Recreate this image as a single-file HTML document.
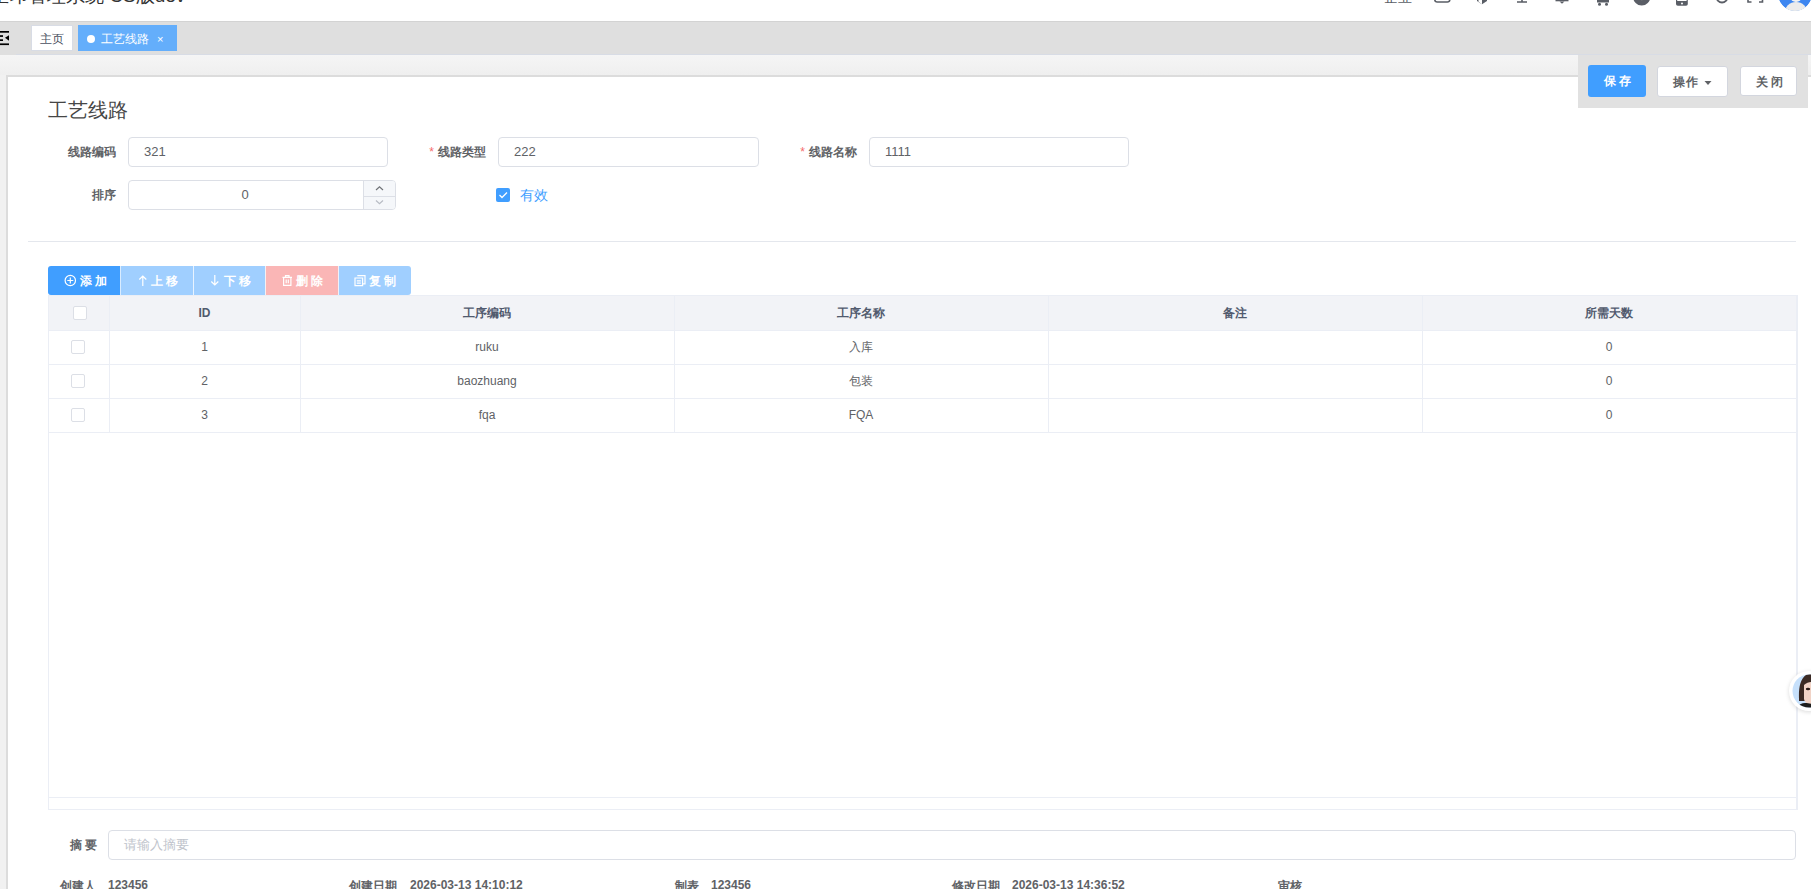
<!DOCTYPE html>
<html><head><meta charset="utf-8">
<style>
*{box-sizing:border-box;margin:0;padding:0}
html,body{width:1811px;height:889px;overflow:hidden;background:#fff;font-family:"Liberation Sans",sans-serif;color:#606266}
.a{position:absolute}
#hdr{left:0;top:0;width:1811px;height:21px;background:#fff;overflow:hidden}
#tabs{left:0;top:21px;width:1811px;height:34px;background:#dfdfdf;border-top:1px solid #d3d3d3}
.tag{height:26px;line-height:26px;font-size:12px;border:1px solid #d8dce5;background:#fff;color:#495060;padding:0 8px}
#under{left:0;top:55px;width:1811px;height:20px;background:linear-gradient(#f5f5f5,#efefef)}
#card{left:6px;top:75px;width:1805px;height:814px;background:#fff;border-left:2px solid #dcdcdc;border-top:2px solid #dcdcdc}
#leftstrip{left:0;top:75px;width:6px;height:814px;background:#f1f1f1}
.lbl{font-size:12px;font-weight:bold;color:#606266;text-align:right;white-space:nowrap}
.req:before{content:"*";color:#f56c6c;margin-right:4px;font-weight:normal}
.inp{border:1px solid #dcdfe6;border-radius:4px;background:#fff;font-size:13px;color:#606266;padding-left:15px;white-space:nowrap}
.btn{border-radius:3px;font-size:12px;text-align:center;letter-spacing:3px;white-space:nowrap}
.tb{top:266px;height:29px;line-height:29px;font-size:12px;font-weight:bold;color:#fff;text-align:center;letter-spacing:2px;white-space:nowrap}
.cb{width:14px;height:14px;border:1px solid #dcdfe6;border-radius:2px;background:#fff}
.vl{width:1px;background:#ebeef5}
.hl{height:1px;background:#ebeef5}
.th{top:296px;height:34px;line-height:34px;font-size:12px;font-weight:bold;color:#515a6e;text-align:center}
.td{height:34px;line-height:34px;font-size:12px;color:#606266;text-align:center}
.ft{top:878px;font-size:12px;font-weight:bold;color:#606266;white-space:nowrap}
</style></head><body>

<div id="hdr" class="a">
  <div class="a" style="left:-10px;top:-17px;font-size:19px;color:#333;white-space:nowrap"><span id="t1">生印管理系统</span> <span id="t2">CS</span><span id="t3">版</span><span id="t4">dev</span></div>
  <div class="a" style="left:1384px;top:-11px;font-size:14px;color:#5a5e66;white-space:nowrap">企业</div>
  <svg class="a" style="left:1380px;top:0" width="431" height="21" viewBox="1380 0 431 21">
    <g fill="none" stroke="#5a5e66" stroke-width="1.6">
      <rect x="1434.8" y="-10" width="15" height="12" rx="2.5"/>
      <path d="M1517 2 H1527 M1522 -3 V2"/>
      <path d="M1555.5 0.5 H1568.5"/>
      <path d="M1748 -6 V2 H1751.5 M1762.5 -6 V2 H1759"/>
    </g>
    <path d="M1477 -4 L1477 1 L1482 4.2 L1487 1 L1487 -4 Z" fill="#5a5e66"/>
    <path d="M1482 -4 L1482 4.2 L1478.5 1.8 L1478.5 -4 Z" fill="#fff"/>
    <path d="M1559.5 1.5 L1564.5 1.5 L1562 3.8 Z" fill="#5a5e66"/>
    <path d="M1597 -6 L1597 2.5 L1609 2.5 L1609 -6 Z" fill="#5a5e66"/>
    <circle cx="1599.5" cy="4.3" r="1.5" fill="#5a5e66"/><circle cx="1606.5" cy="4.3" r="1.5" fill="#5a5e66"/>
    <circle cx="1641.7" cy="-3" r="8.6" fill="#5a5e66"/>
    <path d="M1641 -6 L1642.5 -6 L1642 1 Z" fill="#fff"/>
    <rect x="1676" y="-10" width="11.8" height="15.8" rx="1.8" fill="#5a5e66"/>
    <rect x="1677.2" y="-10" width="9.4" height="11" fill="#fff"/>
    <circle cx="1682" cy="3.5" r="1" fill="#fff"/>
    <path d="M1716.5 -3 A5.5 5.5 0 0 0 1727.5 -3" fill="none" stroke="#5a5e66" stroke-width="1.8"/>
    <clipPath id="avc"><circle cx="1795" cy="-6" r="17"/></clipPath>
    <g clip-path="url(#avc)">
    <circle cx="1795" cy="-6" r="17" fill="#3d86f0"/>
    <ellipse cx="1796" cy="13" rx="11.5" ry="11" fill="#ececec"/>
    <circle cx="1796" cy="-4" r="6" fill="#f2f2f2"/>
    </g>
  </svg>
</div>

<div id="tabs" class="a">
  <svg class="a" style="left:0;top:9px" width="10" height="15" viewBox="0 0 10 15">
    <rect x="0" y="0" width="9" height="1.7" fill="#000"/>
    <rect x="0" y="4.2" width="3" height="1.7" fill="#000"/>
    <rect x="0" y="8.3" width="3" height="1.7" fill="#000"/>
    <rect x="0" y="12.4" width="9" height="1.7" fill="#000"/>
    <path d="M9 4.3 L5 6.8 L9 9.8 Z" fill="#000"/>
  </svg>
  <div class="a tag" style="left:31px;top:3px;width:42px;white-space:nowrap;padding:0 0 0 8px">主页</div>
  <div class="a tag" style="left:78px;top:3px;width:99px;background:#64aefb;border-color:#64aefb;color:#fff;padding-left:22px">工艺线路<span style="font-size:11px;margin-left:8px">×</span>
    <span class="a" style="left:8px;top:9px;width:8px;height:8px;border-radius:50%;background:#fff"></span>
  </div>
</div>

<div id="under" class="a"></div>
<div class="a" style="left:16px;top:54px;width:1795px;height:1px;background:#d8dce5"></div>
<div id="leftstrip" class="a"></div>
<div id="card" class="a"></div>

<!-- action bar -->
<div class="a" style="left:1578px;top:55px;width:230px;height:53px;background:#e1e1e1"></div>
<div class="a btn" style="left:1588px;top:65px;width:58px;height:32px;line-height:33px;background:#409eff;color:#fff;font-weight:bold;padding-left:4px">保存</div>
<div class="a btn" style="left:1657px;top:66px;width:71px;height:31px;line-height:30px;background:#fff;color:#606266;border:1px solid #d3d6de;font-weight:bold;letter-spacing:1px;text-align:left;padding-left:15px">操作<svg style="position:absolute;left:46px;top:13px" width="8" height="6" viewBox="0 0 8 6"><path d="M0.5 1 L7.5 1 L4 5 Z" fill="#606266"/></svg></div>
<div class="a btn" style="left:1740px;top:66px;width:57px;height:30px;line-height:30px;background:#fff;color:#606266;border:1px solid #d3d6de;font-weight:bold;padding-left:4px">关闭</div>

<!-- title -->
<div class="a" style="left:48px;top:97px;font-size:20px;color:#464646;white-space:nowrap">工艺线路</div>

<!-- form -->
<div class="a lbl" style="left:28px;top:144px;width:88px">线路编码</div>
<div class="a inp" style="left:128px;top:137px;width:260px;height:30px;line-height:28px">321</div>
<div class="a lbl req" style="left:398px;top:144px;width:88px">线路类型</div>
<div class="a inp" style="left:498px;top:137px;width:261px;height:30px;line-height:28px">222</div>
<div class="a lbl req" style="left:769px;top:144px;width:88px">线路名称</div>
<div class="a inp" style="left:869px;top:137px;width:260px;height:30px;line-height:28px">1111</div>

<div class="a lbl" style="left:28px;top:187px;width:88px">排序</div>
<div class="a inp" style="left:128px;top:180px;width:268px;height:30px;line-height:28px;padding:0 34px 0 0;text-align:center">0</div>
<div class="a" style="left:363px;top:181px;width:32px;height:28px;background:#f5f7fa;border-left:1px solid #dcdfe6;border-radius:0 3px 3px 0"></div>
<div class="a" style="left:364px;top:196px;width:31px;height:1px;background:#dcdfe6"></div>
<svg class="a" style="left:364px;top:181px" width="31" height="28" viewBox="0 0 31 28"><g fill="none" stroke-width="1.2"><path d="M12 9 L15.5 5.8 L19 9" stroke="#707378"/><path d="M12 19.5 L15.5 22.7 L19 19.5" stroke="#b8bcc4"/></g></svg>

<div class="a" style="left:496px;top:188px;width:14px;height:14px;border-radius:2px;background:#409eff"></div>
<svg class="a" style="left:496px;top:188px" width="14" height="14" viewBox="0 0 14 14"><path d="M3.5 7 L6 9.5 L11 4.5" stroke="#fff" stroke-width="1.3" fill="none"/></svg>
<div class="a" style="left:520px;top:187px;font-size:14px;color:#409eff">有效</div>

<div class="a" style="left:28px;top:241px;width:1768px;height:1px;background:#e4e7ed"></div>

<!-- toolbar -->
<div class="a tb" style="left:48px;width:72px;background:#409eff;border-radius:3px 0 0 3px"></div>
<div class="a tb" style="left:121px;width:72px;background:#a0cfff"></div>
<div class="a tb" style="left:194px;width:71px;background:#a0cfff"></div>
<div class="a tb" style="left:266px;width:72px;background:#fab6b6"></div>
<div class="a tb" style="left:339px;width:72px;background:#a0cfff;border-radius:0 3px 3px 0"></div>
<div class="a" style="left:120px;top:266px;width:1px;height:29px;background:#d9ecff"></div>
<div class="a" style="left:193px;top:266px;width:1px;height:29px;background:#e8f3ff"></div>
<div class="a" style="left:265px;top:266px;width:1px;height:29px;background:#f5f0f3"></div>
<div class="a" style="left:338px;top:266px;width:1px;height:29px;background:#f0f0f8"></div>
<svg class="a" style="left:0;top:260px" width="420" height="40" viewBox="0 260 420 40">
  <g fill="none" stroke="#fff" stroke-width="1.2">
    <circle cx="70.3" cy="280.5" r="5.2"/>
    <path d="M70.3 277.5 V283.5 M67.3 280.5 H73.3"/>
    <path d="M142.8 276 V286 M139.3 279.5 L142.8 276 L146.3 279.5"/>
    <path d="M214.8 275 V285 M211.3 281.5 L214.8 285 L218.3 281.5"/>
    <path d="M282.5 277.3 H292 M285.5 277.3 V275.6 H289 V277.3 M283.6 277.3 V285.4 H290.9 V277.3 M286.2 279.5 V283.2 M288.3 279.5 V283.2"/>
    <path d="M357.3 275.6 H365 V283.8 H362.8"/>
    <path d="M355 278 H362.6 V285.6 H355 Z M356.8 280.8 H360.8 M356.8 283.2 H360.8"/>
  </g>
  <g font-family="Liberation Sans" font-size="12" font-weight="bold" fill="#fff">
    <text x="79.5" y="284.7" letter-spacing="3">添加</text>
    <text x="151.3" y="284.7" letter-spacing="3">上移</text>
    <text x="224" y="284.7" letter-spacing="3">下移</text>
    <text x="296.3" y="284.7" letter-spacing="3">删除</text>
    <text x="369" y="284.7" letter-spacing="3">复制</text>
  </g>
</svg>

<!-- table -->
<div class="a" style="left:48px;top:295px;width:1750px;height:515px;border:1px solid #ebeef5;border-right-width:2px"></div>
<div class="a" style="left:49px;top:296px;width:1747px;height:34px;background:#f2f3f7"></div>
<div class="a hl" style="left:49px;top:330px;width:1747px"></div>
<div class="a hl" style="left:49px;top:364px;width:1747px"></div>
<div class="a hl" style="left:49px;top:398px;width:1747px"></div>
<div class="a hl" style="left:49px;top:432px;width:1747px"></div>
<div class="a hl" style="left:49px;top:797px;width:1747px"></div>
<div class="a vl" style="left:109px;top:296px;height:137px"></div>
<div class="a vl" style="left:300px;top:296px;height:137px"></div>
<div class="a vl" style="left:674px;top:296px;height:137px"></div>
<div class="a vl" style="left:1048px;top:296px;height:137px"></div>
<div class="a vl" style="left:1422px;top:296px;height:137px"></div>

<div class="a cb" style="left:73px;top:306px"></div>
<div class="a th" style="left:109px;width:191px">ID</div>
<div class="a th" style="left:300px;width:374px">工序编码</div>
<div class="a th" style="left:674px;width:374px">工序名称</div>
<div class="a th" style="left:1048px;width:374px">备注</div>
<div class="a th" style="left:1422px;width:374px">所需天数</div>

<div class="a cb" style="left:71px;top:340px"></div>
<div class="a td" style="top:330px;left:109px;width:191px">1</div>
<div class="a td" style="top:330px;left:300px;width:374px">ruku</div>
<div class="a td" style="top:330px;left:674px;width:374px">入库</div>
<div class="a td" style="top:330px;left:1422px;width:374px">0</div>

<div class="a cb" style="left:71px;top:374px"></div>
<div class="a td" style="top:364px;left:109px;width:191px">2</div>
<div class="a td" style="top:364px;left:300px;width:374px">baozhuang</div>
<div class="a td" style="top:364px;left:674px;width:374px">包装</div>
<div class="a td" style="top:364px;left:1422px;width:374px">0</div>

<div class="a cb" style="left:71px;top:408px"></div>
<div class="a td" style="top:398px;left:109px;width:191px">3</div>
<div class="a td" style="top:398px;left:300px;width:374px">fqa</div>
<div class="a td" style="top:398px;left:674px;width:374px">FQA</div>
<div class="a td" style="top:398px;left:1422px;width:374px">0</div>

<!-- summary -->
<div class="a lbl" style="left:28px;top:837px;width:72px;letter-spacing:3px">摘要</div>
<div class="a inp" style="left:108px;top:830px;width:1688px;height:30px;line-height:28px;color:#c0c4cc">请输入摘要</div>

<!-- footer -->
<div class="a ft" style="left:60px">创建人</div>
<div class="a ft" style="left:108px">123456</div>
<div class="a ft" style="left:349px">创建日期</div>
<div class="a ft" style="left:410px">2026-03-13 14:10:12</div>
<div class="a ft" style="left:675px">制表</div>
<div class="a ft" style="left:711px">123456</div>
<div class="a ft" style="left:952px">修改日期</div>
<div class="a ft" style="left:1012px">2026-03-13 14:36:52</div>
<div class="a ft" style="left:1278px">审核</div>

<div class="a" style="left:1789px;top:671px;width:40px;height:40px;border-radius:50%;background:#fff;box-shadow:0 1px 4px rgba(0,0,0,.15)"></div>
<svg class="a" style="left:1789px;top:671px" width="22" height="40" viewBox="0 0 22 40">
  <clipPath id="avf"><circle cx="20" cy="20" r="16.5"/></clipPath>
  <g clip-path="url(#avf)">
    <rect x="0" y="0" width="40" height="40" fill="#c6e0fb"/>
    <path d="M10 28 C9.5 18 11 8 17 4 C19 3 22 3 24 3 L24 30 L10 30 Z" fill="#3b2a24"/>
    <path d="M15 14 C17 12 20 11 22 11 L22 34 C19 34 16 32 15 28 Z" fill="#f1d3c6"/>
    <ellipse cx="19" cy="18" rx="2.2" ry="1.3" fill="#2a1b18"/>
    <path d="M4 40 C8 35 12 32 16 32 C19 32 21 33 24 33 L24 40 Z" fill="#1d1d1d"/>
  </g>
</svg>
</body></html>
